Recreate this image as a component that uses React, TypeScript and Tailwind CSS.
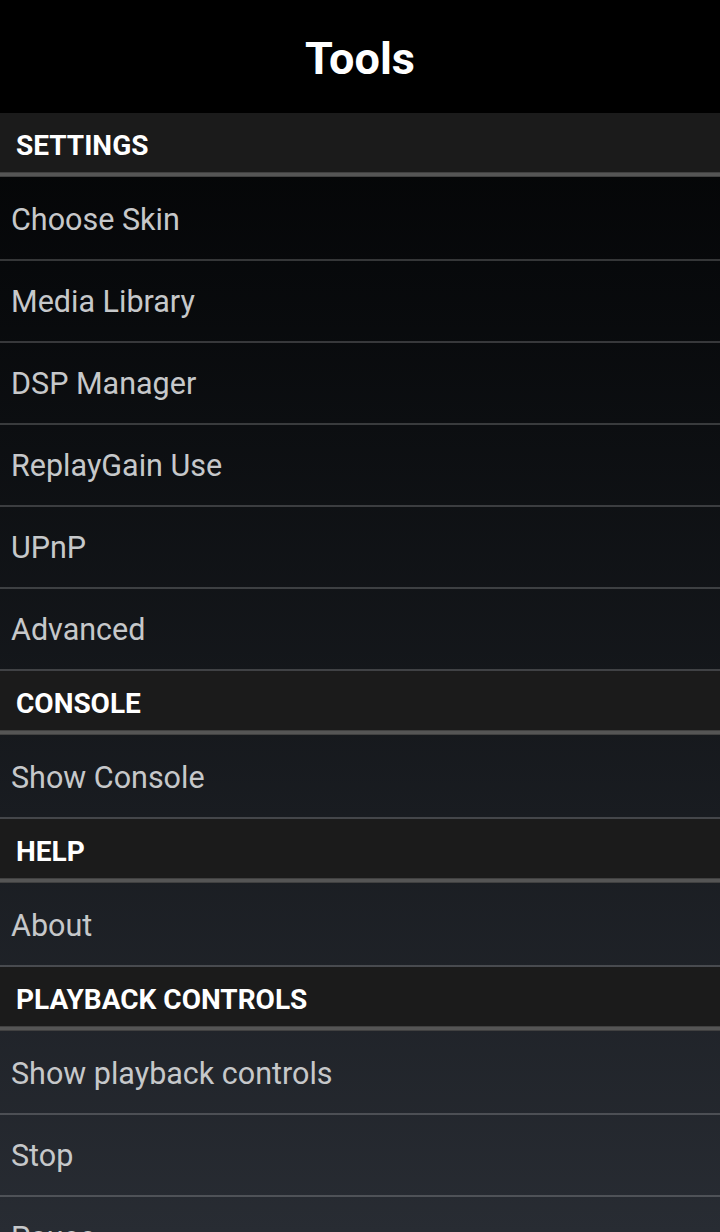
const sections: { title: string; items: string[] }[] = [
  {
    title: "SETTINGS",
    items: ["Choose Skin", "Media Library", "DSP Manager", "ReplayGain Use", "UPnP", "Advanced"],
  },
  { title: "CONSOLE", items: ["Show Console"] },
  { title: "HELP", items: ["About"] },
  { title: "PLAYBACK CONTROLS", items: ["Show playback controls", "Stop", "Pause"] },
];

function SectionHeader({ title }: { title: string }) {
  return (
    <div>
      <div className="flex h-[59px] items-center bg-[#1b1b1b] pl-[16px] pt-[7px]">
        <span className="text-[28px] font-bold leading-none text-white">{title}</span>
      </div>
      <div className="h-[5px] border-y border-[#414141] bg-[#555555]" />
      <div className="h-[2px]" />
    </div>
  );
}

function Row({ label }: { label: string }) {
  return (
    <div className="flex h-[82px] items-center border-b-2 border-[#ffffff30] pl-[11px] pt-[2px]">
      <span className="text-[30.5px] leading-none text-[#c6c8ca]">{label}</span>
    </div>
  );
}

export default function App() {
  return (
    <div
      className="flex h-[1232px] w-[720px] flex-col overflow-hidden bg-black"
      style={{ fontFamily: "Roboto, 'Noto Sans', sans-serif" }}
    >
      {/* Title bar */}
      <div className="flex h-[113px] shrink-0 items-center justify-center bg-black pt-[4px]">
        <h1 className="text-[45px] font-bold leading-none text-white">Tools</h1>
      </div>

      {/* List */}
      <div className="flex-1 overflow-hidden bg-gradient-to-b from-[#040506] to-[#282c33]">
        {sections.map((s) => (
          <div key={s.title}>
            <SectionHeader title={s.title} />
            {s.items.map((it) => (
              <Row key={it} label={it} />
            ))}
          </div>
        ))}
      </div>
    </div>
  );
}
